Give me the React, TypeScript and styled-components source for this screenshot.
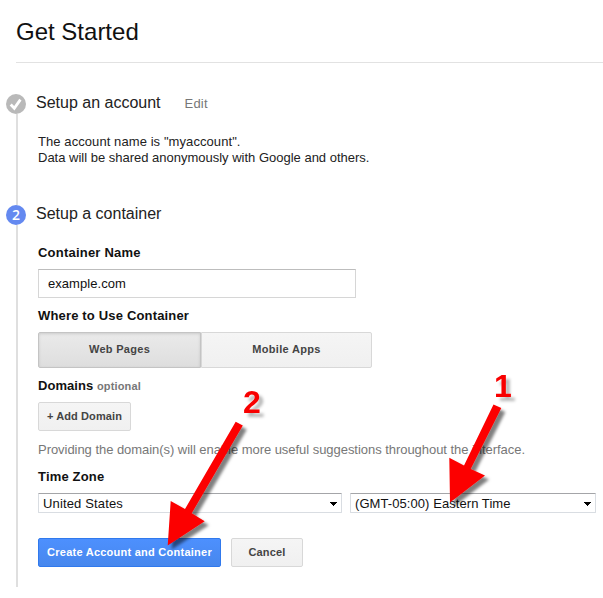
import React from 'react';
import styled, { createGlobalStyle } from 'styled-components';

const GlobalStyle = createGlobalStyle`
  * { box-sizing: border-box; }
  body {
    margin: 0;
    background: #fff;
    color: #222;
    font-family: "Liberation Sans", Arial, sans-serif;
    font-size: 13px;
    overflow: hidden;
  }
`;

const Page = styled.main`
  position: relative;
  width: 603px;
  height: 598px;
  overflow: hidden;
`;

const Header = styled.header`
  height: 63px;
  margin-left: 16px;
  padding-top: 17px;
  border-bottom: 1px solid #e2e2e2;
`;

const Title = styled.h1`
  margin: 0;
  font-size: 24px;
  font-weight: 400;
  line-height: 30px;
  letter-spacing: 0;
  color: #111;
`;

const Steps = styled.div`
  padding: 31px 0 0 6px;
`;

const Step = styled.section<{ $height: number }>`
  display: grid;
  grid-template-columns: 20px 1fr;
  column-gap: 10px;
  height: ${(p) => p.$height}px;
`;

const Rail = styled.div`
  display: flex;
  flex-direction: column;
  align-items: center;
`;

const Marker = styled.div<{ $active?: boolean }>`
  display: flex;
  align-items: center;
  justify-content: center;
  flex: none;
  width: 20px;
  height: 20px;
  border-radius: 50%;
  background: ${(p) => (p.$active ? '#6489f0' : '#b9b9b9')};
  color: #fff;
  font: 600 14px/20px "Open Sans", sans-serif;
`;

const RailLine = styled.div`
  flex: 1;
  width: 2px;
  margin-left: 2px;
  background: #dfdfdf;
`;

const StepTitle = styled.h2`
  display: flex;
  margin: 0;
  font-size: 16px;
  font-weight: 400;
  line-height: 18px;
`;

const EditLink = styled.a`
  margin-left: 24px;
  font-size: 13px;
  line-height: 20px;
  letter-spacing: 0.2px;
  color: #777;
`;

const StepBody = styled.div`
  padding-left: 2px;
`;

const Summary = styled.p`
  margin: 20px 0 0;
  line-height: 16px;
`;

const Line = styled.span<{ $tracking: number }>`
  display: block;
  letter-spacing: ${(p) => p.$tracking}px;
`;

const Label = styled.div<{ $top: number; $tracking: number }>`
  margin-top: ${(p) => p.$top}px;
  font-weight: 700;
  line-height: 16px;
  letter-spacing: ${(p) => p.$tracking}px;
  color: #111;
`;

const Optional = styled.span`
  font-size: 11px;
  letter-spacing: 0.15px;
  color: #777;
`;

const NameInput = styled.input`
  display: block;
  width: 318px;
  height: 29px;
  margin-top: 8px;
  padding: 0 9px;
  border: 1px solid #d6d6d6;
  border-top-color: #bdbdbd;
  border-radius: 0;
  outline: none;
  font: 13px "Liberation Sans", Arial, sans-serif;
  letter-spacing: 0.05px;
  color: #111;
`;

const Segmented = styled.div`
  display: flex;
  width: 334px;
  height: 36px;
  margin-top: 8px;
`;

const Segment = styled.button<{ $selected?: boolean }>`
  width: ${(p) => (p.$selected ? 163 : 171)}px;
  padding: 0 0 2px;
  border: 1px solid ${(p) => (p.$selected ? '#c4c4c4' : '#d8d8d8')};
  border-radius: ${(p) => (p.$selected ? '2px 0 0 2px' : '0 2px 2px 0')};
  background: ${(p) =>
    p.$selected
      ? 'linear-gradient(#eaeaea, #dedede)'
      : 'linear-gradient(#f5f5f5, #f0f0f0)'};
  box-shadow: ${(p) => (p.$selected ? 'inset 0 1px 3px rgba(0,0,0,.13)' : 'none')};
  font: 700 11px "Liberation Sans", Arial, sans-serif;
  letter-spacing: 0.3px;
  color: #444;
`;

const Button = styled.button<{ $width: number; $primary?: boolean; $tracking: number }>`
  width: ${(p) => p.$width}px;
  height: 29px;
  padding: 0 0 1px;
  border: 1px solid ${(p) => (p.$primary ? '#3079ed' : '#d8d8d8')};
  border-radius: 2px;
  background: ${(p) =>
    p.$primary ? 'linear-gradient(#4d90fe, #4787ed)' : 'linear-gradient(#f5f5f5, #f0f0f0)'};
  font: 700 11px "Liberation Sans", Arial, sans-serif;
  letter-spacing: ${(p) => p.$tracking}px;
  white-space: nowrap;
  color: ${(p) => (p.$primary ? '#fff' : '#444')};
`;

const AddRow = styled.div`
  display: flex;
  margin-top: 8px;
`;

const Hint = styled.p`
  margin: 11px 0 0;
  line-height: 16px;
  letter-spacing: -0.043px;
  white-space: nowrap;
  color: #777;
`;

const SelectRow = styled.div`
  display: flex;
  gap: 8px;
  margin-top: 8px;
`;

const SelectBox = styled.div<{ $width: number; $tracking: number }>`
  display: flex;
  align-items: center;
  justify-content: space-between;
  width: ${(p) => p.$width}px;
  height: 20px;
  padding: 1px 4px 0;
  border: 1px solid #d9dde2;
  border-top-color: #a4a5a8;
  border-radius: 1px;
  letter-spacing: ${(p) => p.$tracking}px;
  color: #111;
`;

const Actions = styled.div`
  display: flex;
  gap: 10px;
  margin-top: 25px;
`;

const Annotations = styled.svg`
  position: absolute;
  inset: 0;
  pointer-events: none;
  overflow: hidden;
`;

const Callout = styled.text`
  font: 700 32px "Liberation Sans", Arial, sans-serif;
  fill: #f80004;
`;

const Caret = () => (
  <svg width="7" height="4" viewBox="0 0 7 4" shapeRendering="crispEdges">
    <path d="M0 0H7L3.5 4Z" fill="#000" />
  </svg>
);

const Check = () => (
  <svg width="20" height="20" viewBox="0 0 20 20">
    <path d="M4.7 10.5 8.3 14.3 14.4 5.6" fill="none" stroke="#fff" strokeWidth="2.8" />
  </svg>
);

export default function App() {
  return (
    <Page>
      <GlobalStyle />
      <Header>
        <Title>Get Started</Title>
      </Header>
      <Steps>
        <Step $height={111}>
          <Rail>
            <Marker>
              <Check />
            </Marker>
            <RailLine />
          </Rail>
          <div>
            <StepTitle>
              Setup an account <EditLink>Edit</EditLink>
            </StepTitle>
            <StepBody>
              <Summary>
                <Line $tracking={0.08}>The account name is "myaccount".</Line>
                <Line $tracking={-0.005}>Data will be shared anonymously with Google and others.</Line>
              </Summary>
            </StepBody>
          </div>
        </Step>
        <Step $height={382}>
          <Rail>
            <Marker $active>2</Marker>
            <RailLine />
          </Rail>
          <div>
            <StepTitle>Setup a container</StepTitle>
            <StepBody>
              <Label $top={22} $tracking={0.22}>Container Name</Label>
              <NameInput defaultValue="example.com" />
              <Label $top={10} $tracking={0.17}>Where to Use Container</Label>
              <Segmented>
                <Segment $selected>Web Pages</Segment>
                <Segment>Mobile Apps</Segment>
              </Segmented>
              <Label $top={10} $tracking={0.05}>
                Domains <Optional>optional</Optional>
              </Label>
              <AddRow>
                <Button $width={93} $tracking={0.1}>+ Add Domain</Button>
              </AddRow>
              <Hint>
                Providing the domain(s) will enable more useful suggestions throughout the interface.
              </Hint>
              <Label $top={11} $tracking={0.18}>Time Zone</Label>
              <SelectRow>
                <SelectBox $width={304} $tracking={0.15}>
                  United States <Caret />
                </SelectBox>
                <SelectBox $width={246} $tracking={0.07}>
                  (GMT-05:00) Eastern Time <Caret />
                </SelectBox>
              </SelectRow>
              <Actions>
                <Button $primary $width={183} $tracking={0.25}>Create Account and Container</Button>
                <Button $width={72} $tracking={0.15}>Cancel</Button>
              </Actions>
            </StepBody>
          </div>
        </Step>
      </Steps>
      <Annotations width="603" height="598" viewBox="0 0 603 598">
        <defs>
          <filter id="drop" x="-20%" y="-20%" width="150%" height="150%">
            <feDropShadow dx="4" dy="4" stdDeviation="1.8" floodColor="#000" floodOpacity="0.5" />
          </filter>
          <filter id="softDrop" x="-20%" y="-20%" width="160%" height="160%">
            <feDropShadow dx="4" dy="4" stdDeviation="1.5" floodColor="#000" floodOpacity="0.28" />
          </filter>
        </defs>
        <g fill="#fc0000" filter="url(#drop)">
          <path d="M493.5 404.5 501.3 408 470.7 469 485 475.5 450 502.5 449.3 457.7 464 465.5Z" />
          <path d="M235.7 421.7 242.8 425.5 191.7 513.3 204.7 521.3 167.7 545.5 170.7 501 185 509Z" />
        </g>
        <g filter="url(#softDrop)">
          <Callout x="494" y="396.5">1</Callout>
          <Callout x="243" y="413">2</Callout>
        </g>
      </Annotations>
    </Page>
  );
}
